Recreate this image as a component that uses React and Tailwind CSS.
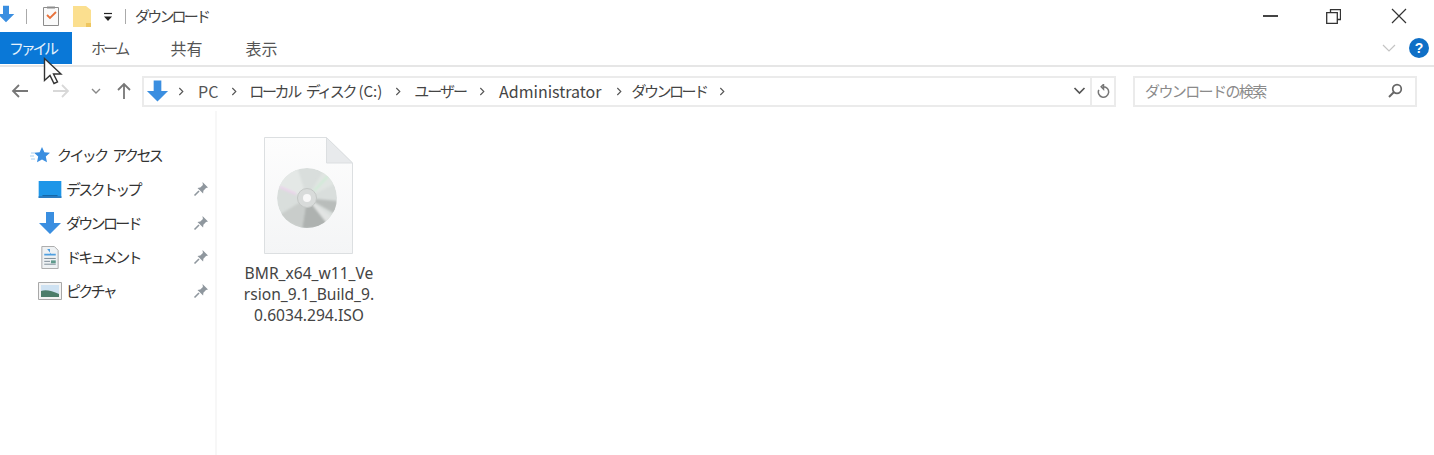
function DownArrow({ className }) {
  return (
    <svg viewBox="0 0 24 24" className={className}>
      <path d="M8 1h8v11h7L12 23 1 12h7z" fill="#3a8ee0" />
    </svg>
  );
}

function Chevron() {
  return (
    <svg viewBox="0 0 8 10" className="w-[7px] h-[9px] shrink-0">
      <path d="M1.5 1l4 4-4 4" fill="none" stroke="#555" strokeWidth="1.3" />
    </svg>
  );
}

function Pin() {
  return (
    <svg viewBox="0 0 16 16" className="w-[16px] h-[16px]">
      <path d="M9.5 1l5.5 5.5-2 .6-2.6 2.6-.3 2.8-5.6-5.6 2.8-.3 2.6-2.6z" fill="#8f979e" />
      <path d="M6 10l-4.5 4.5" stroke="#8f979e" strokeWidth="1.6" />
    </svg>
  );
}

function NavRow({ icon, label }) {
  return (
    <div className="flex items-center h-[34px] pl-[37px] pr-[6px]">
      <div className="w-[25px] h-[24px] flex items-center justify-center shrink-0">{icon}</div>
      <span className="ml-[4px] flex-1 text-[15px] tracking-[-2.7px] text-[#333]">{label}</span>
      <Pin />
    </div>
  );
}

function DiscFile() {
  return (
    <svg viewBox="0 0 89 117" className="w-[89px] h-[117px]">
      <defs>
        <linearGradient id="pageFill" x1="0" y1="0" x2="0" y2="1">
          <stop offset="0" stopColor="#fdfdfd" />
          <stop offset="1" stopColor="#f4f5f6" />
        </linearGradient>
        <filter id="soft" x="-10%" y="-10%" width="120%" height="120%">
          <feGaussianBlur stdDeviation="1" />
        </filter>
        <clipPath id="discClip">
          <circle cx="43" cy="61" r="30" />
        </clipPath>
      </defs>
      <path d="M.5.5h62L88.5 26v90.5H.5z" fill="url(#pageFill)" stroke="#dcdfe1" />
      <path d="M62.5.5V26h26z" fill="#e8eaec" stroke="#dcdfe1" />
      <g clipPath="url(#discClip)">
        <circle cx="43" cy="61" r="30" fill="#d9dedc" />
        <g filter="url(#soft)">
          <path d="M43 61L73 64 73 78z" fill="#b9bdbb" />
          <path d="M43 61L66 90 38 92z" fill="#aeb2b0" />
          <path d="M43 61L38 92 12 80z" fill="#c9cdcb" />
          <path d="M43 61L12 50 13 32 33 30z" fill="#e4e8e6" />
          <path d="M43 61L60 33 76 44z" fill="#e0e5e2" />
          <path d="M43 61L72 83 66 90z" fill="#e2e4e3" />
          <path d="M16 50l16 7" stroke="#ecd2ec" strokeWidth="2" />
          <path d="M50 54l14-15" stroke="#cfecd6" strokeWidth="2" />
        </g>
      </g>
      <circle cx="43" cy="61" r="9.5" fill="#d8dbda" stroke="#c4c8c6" />
      <circle cx="43" cy="61" r="4" fill="#f8f8f8" />
    </svg>
  );
}

export default function App() {
  return (
    <div className="relative w-[1434px] h-[455px] overflow-hidden bg-white text-[15px] font-['Noto_Sans_CJK_JP','Noto_Sans',sans-serif] text-[#333]">
      {/* title bar */}
      <div className="flex items-center h-[32px]">
        <DownArrow className="w-[18px] h-[22px] ml-[-3px] mt-[-4px]" />
        <div className="w-px h-[15px] bg-[#aaa] ml-[11px]" />
        <svg viewBox="0 0 18 22" className="w-[18px] h-[22px] ml-[15px]">
          <path d="M1.5 2.5h15v18h-15z" fill="#fafafa" stroke="#8c8c8c" />
          <path d="M5 2.5h8" stroke="#8c8c8c" strokeWidth="2" />
          <path d="M5 10l3 3 6-6" fill="none" stroke="#e8713a" strokeWidth="1.8" />
        </svg>
        <svg viewBox="0 0 18 22" className="w-[18px] h-[22px] ml-[13px]">
          <path d="M0 1h13l5 4v17H0z" fill="#fbdf8f" />
          <path d="M13 18h5v4h-5z" fill="#eec65f" />
        </svg>
        <svg viewBox="0 0 10 10" className="w-[10px] h-[10px] ml-[12px] mt-[2px]">
          <path d="M1 1.5h8" stroke="#222" strokeWidth="1.2" />
          <path d="M1 4.5h8L5 9z" fill="#222" />
        </svg>
        <div className="w-px h-[15px] bg-[#aaa] ml-[12px]" />
        <span className="ml-[9px] text-[15px] tracking-[-2.8px] text-[#444]">ダウンロード</span>
        <div className="ml-auto flex items-center">
          <div className="w-[15px] h-[2px] bg-[#444] mr-[48px]" />
          <svg viewBox="0 0 15 15" className="w-[15px] h-[15px] mr-[50px]">
            <path d="M4.5 3.5v-3h10v10h-3M.7 3.7h10.6v10.6H.7z" fill="none" stroke="#333" strokeWidth="1.3" />
          </svg>
          <svg viewBox="0 0 16 16" className="w-[16px] h-[16px] mr-[27px]">
            <path d="M1 1l14 14M15 1L1 15" stroke="#333" strokeWidth="1.2" />
          </svg>
        </div>
      </div>

      {/* ribbon tabs */}
      <div className="flex items-start h-[33px] border-b-2 border-[#e6e6e6] box-content">
        <div className="w-[72px] h-[32px] bg-[#0a78d7] text-[#e6f2fc] flex items-center pl-[9px] text-[15px] tracking-[-3.3px]">ファイル</div>
        <div className="ml-[19px] h-[32px] flex items-center text-[#555] tracking-[-2.7px]">ホーム</div>
        <div className="ml-[43px] h-[32px] flex items-center text-[#555] text-[16px]">共有</div>
        <div className="ml-[43px] h-[32px] flex items-center text-[#555] text-[16px]">表示</div>
        <div className="ml-auto h-[32px] flex items-center mr-[5px]">
          <svg viewBox="0 0 14 8" className="w-[14px] h-[8px] mr-[13px]">
            <path d="M1 1l6 6 6-6" fill="none" stroke="#c4c4c4" strokeWidth="1.2" />
          </svg>
          <div className="w-[20px] h-[20px] rounded-full bg-[#0f6fc6] text-white text-[14px] font-bold flex items-center justify-center font-['Liberation_Sans',sans-serif]">?</div>
        </div>
      </div>

      {/* address row */}
      <div className="flex items-center h-[40px] mt-[4px]">
        <svg viewBox="0 0 18 16" className="w-[18px] h-[16px] ml-[11px]">
          <path d="M17 8H2M8 2L2 8l6 6" fill="none" stroke="#777" strokeWidth="1.8" />
        </svg>
        <svg viewBox="0 0 18 16" className="w-[18px] h-[16px] ml-[23px]">
          <path d="M1 8h15M10 2l6 6-6 6" fill="none" stroke="#d8d8d8" strokeWidth="1.8" />
        </svg>
        <svg viewBox="0 0 10 6" className="w-[10px] h-[6px] ml-[21px]">
          <path d="M1 1l4 4 4-4" fill="none" stroke="#888" strokeWidth="1.4" />
        </svg>
        <svg viewBox="0 0 16 18" className="w-[16px] h-[18px] ml-[15px]">
          <path d="M8 17V2M2 8l6-6 6 6" fill="none" stroke="#777" strokeWidth="1.8" />
        </svg>
        <div className="ml-[10px] w-[974px] h-[31px] border-2 border-[#ebebeb] flex items-center">
          <DownArrow className="w-[23px] h-[24px] ml-[2px]" />
          <div className="ml-[9px]"><Chevron /></div>
          <span className="ml-[13px] text-[16px] text-[#555]">PC</span>
          <div className="ml-[13px]"><Chevron /></div>
          <span className="ml-[11px] text-[#444]"><span className="tracking-[-2.4px] [word-spacing:5px]">ローカル ディスク</span> (C:)</span>
          <div className="ml-[13px]"><Chevron /></div>
          <span className="ml-[12px] text-[#444] tracking-[-2px]">ユーザー</span>
          <div className="ml-[13px]"><Chevron /></div>
          <span className="ml-[13px] text-[16px] text-[#444]">Administrator</span>
          <div className="ml-[15px]"><Chevron /></div>
          <span className="ml-[8px] text-[#444] tracking-[-2.5px]">ダウンロード</span>
          <div className="ml-[13px]"><Chevron /></div>
          <svg viewBox="0 0 12 8" className="w-[13px] h-[8px] ml-auto mr-[4px]">
            <path d="M1 1l5 5 5-5" fill="none" stroke="#555" strokeWidth="1.7" />
          </svg>
          <div className="w-[24px] h-full border-l-2 border-[#ebebeb] flex items-center justify-center">
            <svg viewBox="0 0 16 16" className="w-[15px] h-[15px]">
              <path d="M8 3a5.5 5.5 0 1 1-5 3.2M8 0.5v5L5.5 3z" fill="none" stroke="#777" strokeWidth="1.6" />
            </svg>
          </div>
        </div>
        <div className="ml-[17px] w-[284px] h-[31px] border-2 border-[#ebebeb] flex items-center pl-[10px]">
          <span className="text-[#8a8a8a] text-[15px] tracking-[-1.6px]">ダウンロードの検索</span>
          <svg viewBox="0 0 16 16" className="w-[16px] h-[16px] ml-auto mr-[12px]">
            <circle cx="10" cy="6" r="4.3" fill="none" stroke="#666" strokeWidth="1.7" />
            <path d="M7 9l-5 5" stroke="#666" strokeWidth="2" />
          </svg>
        </div>
      </div>

      {/* main area */}
      <div className="flex h-[344px]">
        <aside className="w-[217px] border-r-2 border-[#f7f7f7] pt-[27px]">
          <div className="flex items-center h-[34px] pl-[30px]">
            <svg viewBox="0 0 21 18" className="w-[21px] h-[18px]">
              <path d="M12 1l2.4 5.2 5.6.6-4.2 3.8 1.2 5.6L12 13.4 7 16.2l1.2-5.6L4 6.8l5.6-.6z" fill="#3a8ee0" />
              <path d="M1 7h3M0 10h4M1 13h4" stroke="#a9d0f2" strokeWidth="1" />
            </svg>
            <span className="ml-[6px] tracking-[-2.6px] [word-spacing:5px]">クイック アクセス</span>
          </div>
          <NavRow
            label="デスクトップ"
            icon={
              <svg viewBox="0 0 24 18" className="w-[24px] h-[17px]">
                <path d="M0 0h24v18H0z" fill="#1e96e8" />
                <path d="M4 15h16v1.5H4z" fill="#135f9c" />
                <path d="M0 16h24v2H0z" fill="#2b7cc0" />
              </svg>
            }
          />
          <NavRow label="ダウンロード" icon={<DownArrow className="w-[24px] h-[24px]" />} />
          <NavRow
            label="ドキュメント"
            icon={
              <svg viewBox="0 0 18 24" className="w-[18px] h-[23px]">
                <path d="M.5.5h13l4 4v19H.5z" fill="#eef1f3" stroke="#a8a8a8" />
                <path d="M6 3h3v5H3v2h12V8h-5z" fill="#4f9fe0" />
                <path d="M3 13h12M3 16h6M3 19h12" stroke="#7a8a95" />
                <path d="M10 15h5v3h-5z" fill="#5f9a8c" />
              </svg>
            }
          />
          <NavRow
            label="ピクチャ"
            icon={
              <svg viewBox="0 0 24 18" className="w-[24px] h-[18px]">
                <path d="M.5.5h23v17H.5z" fill="#f4f4f4" stroke="#a8a8a8" />
                <path d="M3 3h18v12H3z" fill="#cfe2f2" />
                <path d="M3 9c5-2 11 0 18 3v3H3z" fill="#4c7d6a" />
              </svg>
            }
          />
        </aside>
        <main className="flex-1 pl-[27px] pt-[26px]">
          <div className="w-[130px] flex flex-col items-center">
            <div className="mr-[2px]"><DiscFile /></div>
            <div className="mt-[9px] text-center text-[15.6px] leading-[21px] font-['Noto_Sans',sans-serif] text-[#444] whitespace-nowrap">
              BMR_x64_w11_Ve<br />rsion_9.1_Build_9.<br />0.6034.294.ISO
            </div>
          </div>
        </main>
      </div>

      {/* mouse cursor */}
      <svg viewBox="0 0 20 28" className="absolute left-[43px] top-[57px] w-[20px] h-[28px]">
        <path d="M1.5 1.5v22l5.5-5 4 8 3.5-1.5-4-8h7.5z" fill="#fff" stroke="#333" strokeWidth="1.4" />
      </svg>
    </div>
  );
}
